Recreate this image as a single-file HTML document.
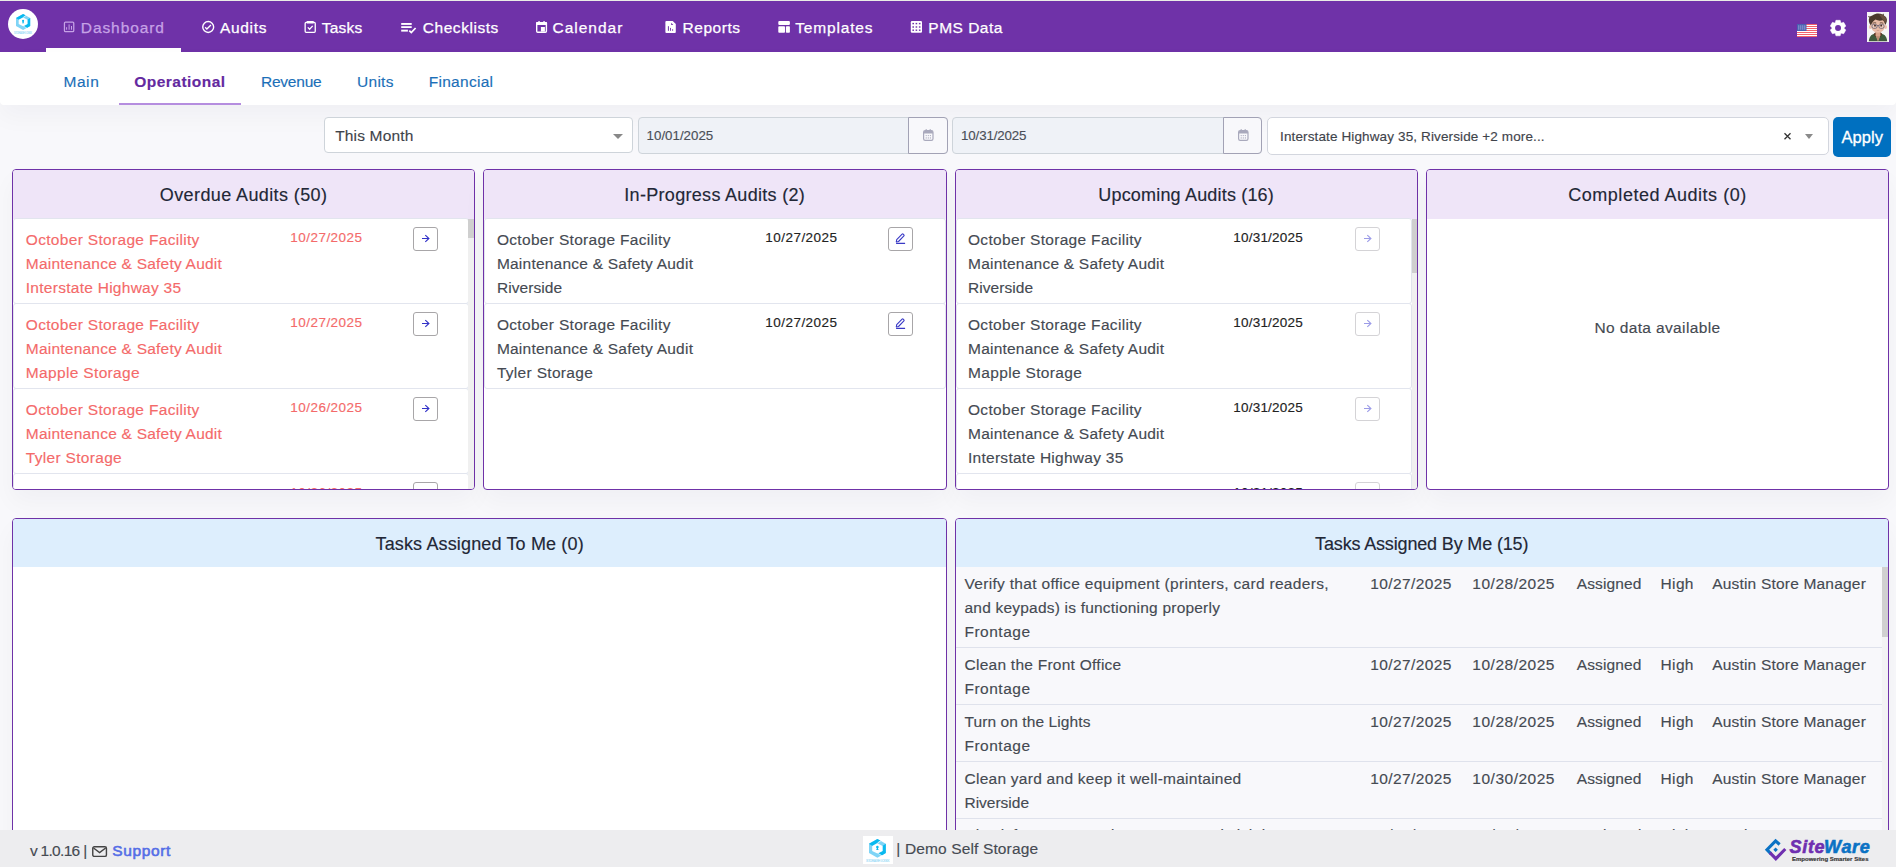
<!DOCTYPE html><html><head><meta charset="utf-8"><title>Dashboard</title><style>
*{box-sizing:border-box}
html,body{margin:0;padding:0}
html{width:1896px;height:867px;overflow:hidden}
body{width:1896px;height:867px;overflow:hidden;position:relative;background:#f8f8fb;font-family:"Liberation Sans",sans-serif;color:#495057}
.t{-webkit-text-stroke-width:.15px;position:absolute;white-space:nowrap;line-height:1;display:block}
.a{position:absolute;display:block}
.card{position:absolute;background:#fff;border:1px solid #6f32a8;border-radius:4px;overflow:hidden;box-shadow:0 12px 24px rgba(18,38,63,.035)}
.hd{position:absolute;left:0;top:0;right:0}
.row{position:absolute;left:0;background:#fff;border:1px solid #e2e5ee;border-radius:3px}
.btn{position:absolute;width:25px;height:24px;border:1px solid #a8a6a8;border-radius:3px;background:#fff}
.sb{position:absolute;background:#f1f1f1}
.th{position:absolute;background:#d0d0d0}
svg{position:absolute;display:block;overflow:visible}

</style></head><body>
<div class="a" style="left:0;top:0;width:1896px;height:1px;background:#e9ece6"></div>
<div class="a" style="left:0;top:1px;width:1896px;height:51px;background:#6f32a8"></div>
<div class="a" style="left:46px;top:48px;width:135px;height:4px;background:#fff"></div>
<div class="a" style="left:8px;top:9px;width:30px;height:30px;border-radius:50%;background:#fff"></div>
<svg style="left:15.9px;top:14px" width="14.2" height="15.90" viewBox="0 0 100 112"><polygon points="50,0 100,28 100,84 50,112 0,84 0,28" fill="#7fd4f6"/><polygon points="0,28 50,0 70,11 50,23 20,41" fill="#08b9ef"/><polygon points="100,28 100,84 76,98 56,87 80,71 80,41" fill="#08b9ef"/><polygon points="50,25 81,41 81,71 50,87 19,71 19,41" fill="#fff"/><path d="M72,9.500L52,22.500" stroke="#fff" stroke-width="5"/><path d="M78,100L54,86" stroke="#fff" stroke-width="4"/><circle cx="50" cy="48" r="7.500" fill="#08b9ef"/><path d="M45,50h10l-1.500,8l4.500,8h-16l4.500,-8z" fill="#08b9ef"/></svg>
<span class="t" style="left:13.5px;top:32px;font-size:3px;color:#9bdcf8;transform-origin:left top;transform:scaleX(.8);letter-spacing:-.2px">STORAGE LOGIX</span>
<svg style="left:0;top:0" width="1896" height="52" viewBox="0 0 1896 52"><rect x="64.45" y="22.05" width="9.3" height="9.6" rx="1" fill="none" stroke="#c6a2e6" stroke-width="1.25"/><rect x="66.1" y="27.2" width="1" height="2.5" fill="#c6a2e6"/><rect x="68.6" y="24.4" width="1" height="5.3" fill="#c6a2e6"/><rect x="71" y="26" width="1" height="3.7" fill="#c6a2e6"/><circle cx="208.2" cy="27" r="5.45" fill="none" stroke="#fff" stroke-width="1.4"/><path d="M205.2 27.2l1.7 1.9 4-4" fill="none" stroke="#fff" stroke-width="1.4"/><rect x="305.15" y="22.4" width="10.1" height="9.95" rx="1" fill="none" stroke="#fff" stroke-width="1.3"/><rect x="306.6" y="21.1" width="7.2" height="2.5" rx=".6" fill="#fff"/><path d="M307.8 27.4l1.8 1.8 3.1-3.3" fill="none" stroke="#fff" stroke-width="1.3"/><rect x="401.2" y="23" width="10.5" height="1.9" fill="#fff"/><rect x="401.2" y="26.2" width="10.5" height="1.8" fill="#fff"/><rect x="401.2" y="29.7" width="6.7" height="1.9" fill="#fff"/><path d="M409.3 30.6l2 2 4.300-4.600" fill="none" stroke="#fff" stroke-width="1.7"/><rect x="536.7" y="22.8" width="9.7" height="9.5" rx="1" fill="none" stroke="#fff" stroke-width="1.4"/><rect x="536" y="22.100" width="11.100" height="2.800" rx=".8" fill="#fff"/><rect x="538.3" y="21.100" width="1.500" height="2" fill="#fff"/><rect x="543.3" y="21.100" width="1.500" height="2" fill="#fff"/><rect x="540.9" y="27" width="4" height="4.600" fill="#fff"/><path d="M666.400 21h6.300l3.100 3.100v7.900a1 1 0 0 1-1 1h-8.400a1 1 0 0 1-1-1v-10a1 1 0 0 1 1-1z" fill="#fff"/><path d="M671.200 22.800v2.100h2.100z" fill="#6f32a8"/><rect x="667.900" y="26.200" width="1" height="4.600" fill="#6f32a8"/><rect x="670.100" y="27.900" width=".9" height="2.900" fill="#6f32a8"/><rect x="672.200" y="29.200" width=".9" height="1.600" fill="#6f32a8"/><rect x="778.300" y="21.100" width="11.600" height="3.800" rx="1" fill="#fff"/><rect x="778.300" y="26.200" width="6.700" height="6.600" rx=".8" fill="#fff"/><rect x="785.900" y="26.200" width="4" height="6.600" rx=".8" fill="#fff"/><rect x="910.800" y="21.100" width="11.200" height="11.700" rx="1.200" fill="#fff"/><rect x="912.40" y="22.90" width="1.600" height="1.400" fill="#6f32a8"/><rect x="912.40" y="26.30" width="1.600" height="1.400" fill="#6f32a8"/><rect x="912.40" y="29.50" width="1.600" height="1.400" fill="#6f32a8"/><rect x="915.60" y="22.90" width="1.600" height="1.400" fill="#6f32a8"/><rect x="915.60" y="26.30" width="1.600" height="1.400" fill="#6f32a8"/><rect x="915.60" y="29.50" width="1.600" height="1.400" fill="#6f32a8"/><rect x="918.90" y="22.90" width="1.600" height="1.400" fill="#6f32a8"/><rect x="918.90" y="26.30" width="1.600" height="1.400" fill="#6f32a8"/><rect x="918.90" y="29.50" width="1.600" height="1.400" fill="#6f32a8"/></svg>
<svg style="left:1797px;top:24px" width="20" height="13" viewBox="0 0 20 13"><rect width="20" height="13" fill="#fff"/><rect x="0" y="0.00" width="20" height="1" fill="#f2616c"/><rect x="0" y="2.00" width="20" height="1" fill="#f2616c"/><rect x="0" y="4.00" width="20" height="1" fill="#f2616c"/><rect x="0" y="6.00" width="20" height="1" fill="#f2616c"/><rect x="0" y="8.00" width="20" height="1" fill="#f2616c"/><rect x="0" y="10.00" width="20" height="1" fill="#f2616c"/><rect x="0" y="12.00" width="20" height="1" fill="#f2616c"/><rect width="9.5" height="7" fill="#4a5fb0"/><rect x="1.5" y="1.2" width=".7" height="4.6" fill="#aab4e0"/><rect x="3.5" y="1.2" width=".7" height="4.6" fill="#aab4e0"/><rect x="5.5" y="1.2" width=".7" height="4.6" fill="#aab4e0"/><rect x="7.5" y="1.2" width=".7" height="4.6" fill="#aab4e0"/></svg>
<svg style="left:1830px;top:20px" width="16.1" height="16.1" viewBox="0 0 100 100"><polygon points="32.9,15.5 36.7,1.8 63.3,1.8 67.1,15.5 71.3,17.9 85.1,14.4 98.4,37.5 88.4,47.6 88.4,52.4 98.4,62.5 85.1,85.6 71.3,82.1 67.1,84.5 63.3,98.2 36.7,98.2 32.9,84.5 28.7,82.1 14.9,85.6 1.6,62.5 11.6,52.4 11.6,47.6 1.6,37.5 14.9,14.4 28.7,17.9" fill="#fff" stroke="#fff" stroke-width="3" stroke-linejoin="round"/><circle cx="50" cy="50" r="18.500" fill="#6f32a8"/></svg>
<div class="a" style="left:1867px;top:12px;width:22px;height:30px;background:#f6f5f5;overflow:hidden"><svg style="left:0;top:0" width="22" height="30" viewBox="0 0 22 30"><rect width="22" height="30" fill="#f6f5f5"/><path d="M1.800 29.300c.3-3.300 1.400-6 4.200-7l2.500-.8h5l2.500.8c2.800 1 3.900 3.700 4.200 7z" fill="#3f5a3c"/><path d="M6.800 21.800l1.500-1.300h5.400l1.500 1.300-1.200 2.700h-6z" fill="#5c3323"/><path d="M8.600 19h4.800v4.200l-2.400 6.100-2.400-6.100z" fill="#d9a58c"/><path d="M9 24.200h4l-2 5.100z" fill="#b98a72"/><ellipse cx="3.400" cy="15" rx="1.400" ry="2.100" fill="#eec0ae"/><ellipse cx="18.600" cy="15" rx="1.400" ry="2.100" fill="#eec0ae"/><path d="M4.300 11c0-3.500 2.800-5.500 6.700-5.500s6.700 2 6.700 5.500v3.500c0 3.800-3.500 6.200-6.700 6.200s-6.700-2.400-6.700-6.200z" fill="#e9bca7"/><path d="M3.900 13.500c-1.800-2-2.800-5.500-1.500-8-1-.5-1.300-1-1.200-1.500 1.500.8 3 .3 4.500-.8 3-2.200 7-2.400 9.800-.6l1.200-1 .1 1.800c2.300 1 3.600 3.300 3 6-.3 1.500-1 2.600-1.700 3.600-.2-2.300-1-3.800-2.300-4.800-2.200.8-5.300.6-7.300-.6-1.800 1.200-3.600 3-4.600 5.900z" fill="#4a392b"/><path d="M12 2.500c2.500-.3 5 .5 6.300 2.500 1.200 1.800 1 4-.2 6.500-.4-1.600-1-2.500-2-3.300-1-1.600-2.400-3.600-4.100-5.700z" fill="#6a5240"/><path d="M5.700 11.300q1.700-1 3.500-.3M12.800 11q1.800-.7 3.500.3" stroke="#5a4537" stroke-width=".9" fill="none"/><rect x="5" y="12.400" width="5" height="3.900" rx="1.500" fill="rgba(255,255,255,.25)" stroke="#55536a" stroke-width=".7"/><rect x="12" y="12.400" width="5" height="3.900" rx="1.500" fill="rgba(255,255,255,.25)" stroke="#55536a" stroke-width=".7"/><path d="M10 13.600h2" stroke="#55536a" stroke-width=".7"/><ellipse cx="8" cy="13.700" rx="1" ry=".9" fill="#4a2f25"/><ellipse cx="14.200" cy="13.700" rx="1" ry=".9" fill="#4a2f25"/><path d="M9.700 18.300q1.300.6 2.600 0" stroke="#c48f7d" stroke-width=".6" fill="none"/></svg></div>
<div class="a" style="left:0;top:52px;width:1896px;height:53px;background:#fff;border-radius:0 0 4px 4px;box-shadow:0 12px 24px rgba(18,38,63,.035)"></div>
<div class="a" style="left:119px;top:103px;width:122px;height:2px;background:#b58ddf"></div>
<div class="a" style="left:324px;top:117px;width:309px;height:36px;background:#fff;border:1px solid #ced4da;border-radius:4px"></div>
<div class="a" style="left:613px;top:134px;width:0;height:0;border-left:5px solid transparent;border-right:5px solid transparent;border-top:5px solid #888"></div>
<div class="a" style="left:638px;top:117px;width:310px;height:36.500px;background:#eff2f7;border:1px solid #ced4da;border-radius:4px"></div>
<div class="a" style="left:908.2px;top:117px;width:39.800px;height:36.500px;background:#f8f8fb;border:1px solid #a2a2b5;border-radius:0 4px 4px 0"></div>
<svg style="left:923.2px;top:129px" width="10.6" height="11.9" viewBox="0 0 10.600 11.900"><rect x=".6" y="1.700" width="9.400" height="9.600" rx="1.600" fill="none" stroke="#a9a9bc" stroke-width="1.200"/><path d="M.6 3.300a1.600 1.600 0 0 1 1.600-1.600h6.200a1.600 1.600 0 0 1 1.600 1.600v1.300h-9.400z" fill="#a9a9bc"/><rect x="2.700" y="0" width="1.200" height="2.500" rx=".5" fill="#a9a9bc"/><rect x="6.700" y="0" width="1.200" height="2.500" rx=".5" fill="#a9a9bc"/><circle cx="3.2" cy="6.6" r=".62" fill="#a9a9bc"/><circle cx="3.2" cy="9" r=".62" fill="#a9a9bc"/><circle cx="5.3" cy="6.6" r=".62" fill="#a9a9bc"/><circle cx="5.3" cy="9" r=".62" fill="#a9a9bc"/><circle cx="7.4" cy="6.6" r=".62" fill="#a9a9bc"/><circle cx="7.4" cy="9" r=".62" fill="#a9a9bc"/></svg>
<div class="a" style="left:952.4px;top:117px;width:310px;height:36.500px;background:#eff2f7;border:1px solid #ced4da;border-radius:4px"></div>
<div class="a" style="left:1222.6px;top:117px;width:39.800px;height:36.500px;background:#f8f8fb;border:1px solid #a2a2b5;border-radius:0 4px 4px 0"></div>
<svg style="left:1237.6px;top:129px" width="10.6" height="11.9" viewBox="0 0 10.600 11.900"><rect x=".6" y="1.700" width="9.400" height="9.600" rx="1.600" fill="none" stroke="#a9a9bc" stroke-width="1.200"/><path d="M.6 3.300a1.600 1.600 0 0 1 1.600-1.600h6.200a1.600 1.600 0 0 1 1.600 1.600v1.300h-9.400z" fill="#a9a9bc"/><rect x="2.700" y="0" width="1.200" height="2.500" rx=".5" fill="#a9a9bc"/><rect x="6.700" y="0" width="1.200" height="2.500" rx=".5" fill="#a9a9bc"/><circle cx="3.2" cy="6.6" r=".62" fill="#a9a9bc"/><circle cx="3.2" cy="9" r=".62" fill="#a9a9bc"/><circle cx="5.3" cy="6.6" r=".62" fill="#a9a9bc"/><circle cx="5.3" cy="9" r=".62" fill="#a9a9bc"/><circle cx="7.4" cy="6.6" r=".62" fill="#a9a9bc"/><circle cx="7.4" cy="9" r=".62" fill="#a9a9bc"/></svg>
<div class="a" style="left:1267px;top:117px;width:562px;height:38px;background:#fff;border:1px solid #d3d6de;border-radius:5px"></div>
<svg style="left:1783.5px;top:132.7px" width="7" height="6.5" viewBox="0 0 7 6.5"><path d="M.5.300L6.500 6.200M6.500.300L.5 6.200" stroke="#333" stroke-width="1.300"/></svg>
<div class="a" style="left:1805px;top:134px;width:0;height:0;border-left:4.5px solid transparent;border-right:4.5px solid transparent;border-top:5px solid #8a8a8a"></div>
<div class="a" style="left:1833px;top:117px;width:58px;height:40px;background:#0070c0;border-radius:5px"></div>
<div class="card" style="left:12px;top:169px;width:463px;height:321px"><div class="hd" style="height:49px;background:#efe5f8"></div><div class="row" style="top:48px;width:456px;height:86px"></div><div class="btn" style="left:400px;top:57px;border-color:#a8a6a8"><svg style="left:0;top:0" width="23" height="22" viewBox="0 0 23 22"><path d="M8 10.500H14.600M11.300 7.100L14.900 10.500L11.300 13.900" fill="none" stroke="#3232c8" stroke-width="1.150"/></svg></div><div class="row" style="top:133px;width:456px;height:86px"></div><div class="btn" style="left:400px;top:142px;border-color:#a8a6a8"><svg style="left:0;top:0" width="23" height="22" viewBox="0 0 23 22"><path d="M8 10.500H14.600M11.300 7.100L14.900 10.500L11.300 13.900" fill="none" stroke="#3232c8" stroke-width="1.150"/></svg></div><div class="row" style="top:218px;width:456px;height:86px"></div><div class="btn" style="left:400px;top:227px;border-color:#a8a6a8"><svg style="left:0;top:0" width="23" height="22" viewBox="0 0 23 22"><path d="M8 10.500H14.600M11.300 7.100L14.900 10.500L11.300 13.900" fill="none" stroke="#3232c8" stroke-width="1.150"/></svg></div><div class="row" style="top:303px;width:456px;height:86px"></div><div class="btn" style="left:400px;top:312px;border-color:#a8a6a8"><svg style="left:0;top:0" width="23" height="22" viewBox="0 0 23 22"><path d="M8 10.500H14.600M11.300 7.100L14.900 10.500L11.300 13.900" fill="none" stroke="#3232c8" stroke-width="1.150"/></svg></div><div class="sb" style="left:455.4px;top:49px;width:5.6px;height:271px"></div><div class="th" style="left:455.4px;top:49px;width:5.6px;height:19px"></div></div>
<div class="card" style="left:483px;top:169px;width:464px;height:321px"><div class="hd" style="height:49px;background:#efe5f8"></div><div class="row" style="top:48px;width:462px;height:86px"></div><div class="btn" style="left:404px;top:57px;border-color:#a8a6a8"><svg style="left:-.9px;top:-1.1px" width="23" height="22" viewBox="0 0 23 22"><path d="M8.700 12.700L14.100 7.100a.8.800 0 0 1 1.100 0l.7.700a.8.800 0 0 1 0 1.100L10.500 14.500l-2.200.400z" fill="none" stroke="#3a3ac6" stroke-width="1.100" stroke-linejoin="round"/><path d="M8.100 16.300h9" stroke="#3a3ac6" stroke-width="1.300"/></svg></div><div class="row" style="top:133px;width:462px;height:86px"></div><div class="btn" style="left:404px;top:142px;border-color:#a8a6a8"><svg style="left:-.9px;top:-1.1px" width="23" height="22" viewBox="0 0 23 22"><path d="M8.700 12.700L14.100 7.100a.8.800 0 0 1 1.100 0l.7.700a.8.800 0 0 1 0 1.100L10.500 14.500l-2.200.400z" fill="none" stroke="#3a3ac6" stroke-width="1.100" stroke-linejoin="round"/><path d="M8.100 16.300h9" stroke="#3a3ac6" stroke-width="1.300"/></svg></div></div>
<div class="card" style="left:955px;top:169px;width:463px;height:321px"><div class="hd" style="height:49px;background:#efe5f8"></div><div class="row" style="top:48px;width:456px;height:86px"></div><div class="btn" style="left:399px;top:57px;border-color:#d4d3d6"><svg style="left:0;top:0" width="23" height="22" viewBox="0 0 23 22"><path d="M8 10.500H14.600M11.300 7.100L14.900 10.500L11.300 13.900" fill="none" stroke="#9c9ce8" stroke-width="1.150"/></svg></div><div class="row" style="top:133px;width:456px;height:86px"></div><div class="btn" style="left:399px;top:142px;border-color:#d4d3d6"><svg style="left:0;top:0" width="23" height="22" viewBox="0 0 23 22"><path d="M8 10.500H14.600M11.300 7.100L14.900 10.500L11.300 13.900" fill="none" stroke="#9c9ce8" stroke-width="1.150"/></svg></div><div class="row" style="top:218px;width:456px;height:86px"></div><div class="btn" style="left:399px;top:227px;border-color:#d4d3d6"><svg style="left:0;top:0" width="23" height="22" viewBox="0 0 23 22"><path d="M8 10.500H14.600M11.300 7.100L14.900 10.500L11.300 13.900" fill="none" stroke="#9c9ce8" stroke-width="1.150"/></svg></div><div class="row" style="top:303px;width:456px;height:86px"></div><div class="btn" style="left:399px;top:312px;border-color:#d4d3d6"><svg style="left:0;top:0" width="23" height="22" viewBox="0 0 23 22"><path d="M8 10.500H14.600M11.300 7.100L14.900 10.500L11.300 13.900" fill="none" stroke="#9c9ce8" stroke-width="1.150"/></svg></div><div class="sb" style="left:455.6px;top:49px;width:5.4px;height:271px"></div><div class="th" style="left:455.6px;top:49px;width:5.4px;height:54px"></div></div>
<div class="card" style="left:1426px;top:169px;width:463px;height:321px"><div class="hd" style="height:49px;background:#efe5f8"></div></div>
<div class="card" style="left:12px;top:518px;width:935px;height:346px"><div class="hd" style="height:48px;background:#ddeefd"></div></div>
<div class="card" style="left:955px;top:518px;width:934px;height:346px"><div class="hd" style="height:48px;background:#ddeefd"></div><div class="a" style="left:0;top:48px;width:927px;height:81px;background:#f8f8fb;border-bottom:1px solid #dfe2ec"></div><div class="a" style="left:0;top:129px;width:927px;height:57px;background:#f8f8fb;border-bottom:1px solid #dfe2ec"></div><div class="a" style="left:0;top:186px;width:927px;height:57px;background:#f8f8fb;border-bottom:1px solid #dfe2ec"></div><div class="a" style="left:0;top:243px;width:927px;height:57px;background:#f8f8fb;border-bottom:1px solid #dfe2ec"></div><div class="a" style="left:0;top:300px;width:927px;height:57px;background:#f8f8fb;border-bottom:1px solid #dfe2ec"></div><div class="sb" style="left:926.3px;top:48px;width:6px;height:320px;background:#f3f3f4"></div><div class="th" style="left:926.3px;top:48px;width:6px;height:69.600px"></div></div>
<div class="a" id="footer" style="left:0;top:830px;width:1896px;height:37px;background:#ededef;z-index:5"></div>
<svg style="z-index:6;left:91.8px;top:846.3px" width="15.2" height="11.2" viewBox="0 0 30 22"><rect x="1.500" y="1.500" width="27" height="19" rx="3" fill="none" stroke="#444" stroke-width="2.800"/><path d="M3 4l12 9 12-9" fill="none" stroke="#444" stroke-width="2.800"/></svg>
<div class="a" style="left:863px;top:836px;width:30px;height:28px;background:#fff;z-index:6"></div>
<svg style="z-index:7;left:869.25px;top:838.7px" width="16.8" height="18.82" viewBox="0 0 100 112"><polygon points="50,0 100,28 100,84 50,112 0,84 0,28" fill="#7fd4f6"/><polygon points="0,28 50,0 70,11 50,23 20,41" fill="#08b9ef"/><polygon points="100,28 100,84 76,98 56,87 80,71 80,41" fill="#08b9ef"/><polygon points="50,25 81,41 81,71 50,87 19,71 19,41" fill="#fff"/><path d="M72,9.500L52,22.500" stroke="#fff" stroke-width="5"/><path d="M78,100L54,86" stroke="#fff" stroke-width="4"/><circle cx="50" cy="48" r="7.500" fill="#08b9ef"/><path d="M45,50h10l-1.500,8l4.500,8h-16l4.500,-8z" fill="#08b9ef"/></svg>
<span class="t" style="left:865.8px;top:860px;font-size:3.6px;color:#a0ddf8;z-index:7;transform-origin:left top;transform:scaleX(.9);letter-spacing:-.3px">STORAGE LOGIX</span>
<svg style="left:1760px;top:834px;z-index:6" width="32" height="32" viewBox="1760 834 32 32"><path d="M1779.600 844.500L1775.600 840.900L1767 849.700L1771 853.800" fill="none" stroke="#0a72c4" stroke-width="3.100" stroke-linejoin="miter"/><path d="M1769.900 852.700L1775.800 858.700L1785.300 849" fill="none" stroke="#6f2fb0" stroke-width="3.100" stroke-linejoin="miter"/><rect x="1774" y="848.100" width="3.200" height="3.200" transform="rotate(45 1775.600 849.700)" fill="#0a72c4"/></svg>
<span class="t" style="left:80.80px;top:19.81px;font-size:15.5px;color:#c6a2e6;letter-spacing:0.919px;-webkit-text-stroke:.25px #c6a2e6;">Dashboard</span>
<span class="t" style="left:219.90px;top:19.81px;font-size:15.5px;color:#fff;letter-spacing:0.701px;-webkit-text-stroke:.25px #fff;">Audits</span>
<span class="t" style="left:321.70px;top:19.81px;font-size:15.5px;color:#fff;letter-spacing:0.215px;-webkit-text-stroke:.25px #fff;">Tasks</span>
<span class="t" style="left:422.80px;top:19.81px;font-size:15.5px;color:#fff;letter-spacing:0.546px;-webkit-text-stroke:.25px #fff;">Checklists</span>
<span class="t" style="left:552.50px;top:19.81px;font-size:15.5px;color:#fff;letter-spacing:0.987px;-webkit-text-stroke:.25px #fff;">Calendar</span>
<span class="t" style="left:682.50px;top:19.81px;font-size:15.5px;color:#fff;letter-spacing:0.546px;-webkit-text-stroke:.25px #fff;">Reports</span>
<span class="t" style="left:795.30px;top:19.81px;font-size:15.5px;color:#fff;letter-spacing:0.816px;-webkit-text-stroke:.25px #fff;">Templates</span>
<span class="t" style="left:928.30px;top:19.81px;font-size:15.5px;color:#fff;letter-spacing:0.495px;-webkit-text-stroke:.25px #fff;">PMS Data</span>
<span class="t" style="left:63.40px;top:74.01px;font-size:15.5px;color:#1b6fb8;letter-spacing:0.598px;">Main</span>
<span class="t" style="left:134.30px;top:74.01px;font-size:15.5px;color:#6429a0;font-weight:700;letter-spacing:0.460px;">Operational</span>
<span class="t" style="left:260.90px;top:74.01px;font-size:15.5px;color:#1b6fb8;letter-spacing:-0.207px;">Revenue</span>
<span class="t" style="left:357.10px;top:74.01px;font-size:15.5px;color:#1b6fb8;letter-spacing:0.254px;">Units</span>
<span class="t" style="left:428.70px;top:74.01px;font-size:15.5px;color:#1b6fb8;letter-spacing:0.285px;">Financial</span>
<span class="t" style="left:335.20px;top:128.01px;font-size:15.5px;color:#3f444b;letter-spacing:0.163px;">This Month</span>
<span class="t" style="left:646.60px;top:129.00px;font-size:13.3px;color:#4a4f57;letter-spacing:0.004px;">10/01/2025</span>
<span class="t" style="left:961.10px;top:129.00px;font-size:13.3px;color:#4a4f57;letter-spacing:-0.146px;">10/31/2025</span>
<span class="t" style="left:1280.10px;top:130.01px;font-size:13.5px;color:#3f444b;letter-spacing:0.124px;">Interstate Highway 35, Riverside +2 more...</span>
<span class="t" style="left:1841.40px;top:129.00px;font-size:16.5px;color:#fff;letter-spacing:0.064px;-webkit-text-stroke:.3px #fff;">Apply</span>
<span class="t" style="left:159.80px;top:185.86px;font-size:18px;color:#222736;letter-spacing:0.395px;">Overdue Audits (50)</span>
<span class="t" style="left:624.30px;top:185.86px;font-size:18px;color:#222736;letter-spacing:0.306px;">In-Progress Audits (2)</span>
<span class="t" style="left:1098.30px;top:185.86px;font-size:18px;color:#222736;letter-spacing:0.180px;">Upcoming Audits (16)</span>
<span class="t" style="left:1568.30px;top:185.86px;font-size:18px;color:#222736;letter-spacing:0.515px;">Completed Audits (0)</span>
<span class="t" style="left:1594.50px;top:319.51px;font-size:15.5px;color:#454a52;letter-spacing:0.366px;">No data available</span>
<span class="t" style="left:25.80px;top:231.70px;font-size:15.5px;color:#f46a6a;letter-spacing:0.318px;">October Storage Facility</span>
<span class="t" style="left:25.80px;top:255.70px;font-size:15.5px;color:#f46a6a;letter-spacing:0.225px;">Maintenance &amp; Safety Audit</span>
<span class="t" style="left:25.80px;top:279.70px;font-size:15.5px;color:#f46a6a;letter-spacing:0.270px;">Interstate Highway 35</span>
<span class="t" style="left:290.30px;top:230.80px;font-size:13.5px;color:#f46a6a;letter-spacing:0.462px;">10/27/2025</span>
<span class="t" style="left:25.80px;top:316.70px;font-size:15.5px;color:#f46a6a;letter-spacing:0.318px;">October Storage Facility</span>
<span class="t" style="left:25.80px;top:340.70px;font-size:15.5px;color:#f46a6a;letter-spacing:0.225px;">Maintenance &amp; Safety Audit</span>
<span class="t" style="left:25.80px;top:364.70px;font-size:15.5px;color:#f46a6a;letter-spacing:0.340px;">Mapple Storage</span>
<span class="t" style="left:290.30px;top:315.80px;font-size:13.5px;color:#f46a6a;letter-spacing:0.462px;">10/27/2025</span>
<span class="t" style="left:25.80px;top:401.70px;font-size:15.5px;color:#f46a6a;letter-spacing:0.318px;">October Storage Facility</span>
<span class="t" style="left:25.80px;top:425.70px;font-size:15.5px;color:#f46a6a;letter-spacing:0.225px;">Maintenance &amp; Safety Audit</span>
<span class="t" style="left:25.80px;top:449.70px;font-size:15.5px;color:#f46a6a;letter-spacing:0.309px;">Tyler Storage</span>
<span class="t" style="left:290.30px;top:400.80px;font-size:13.5px;color:#f46a6a;letter-spacing:0.462px;">10/26/2025</span>
<span class="t" style="left:25.80px;top:486.70px;font-size:15.5px;color:#f46a6a;letter-spacing:0.318px;clip-path:inset(0 0 13.20px 0);">October Storage Facility</span>
<span class="t" style="left:290.30px;top:485.80px;font-size:13.5px;color:#f46a6a;letter-spacing:0.462px;clip-path:inset(0 0 10.30px 0);">10/26/2025</span>
<span class="t" style="left:496.90px;top:231.70px;font-size:15.5px;color:#454a52;letter-spacing:0.318px;">October Storage Facility</span>
<span class="t" style="left:496.90px;top:255.70px;font-size:15.5px;color:#454a52;letter-spacing:0.225px;">Maintenance &amp; Safety Audit</span>
<span class="t" style="left:496.90px;top:279.70px;font-size:15.5px;color:#454a52;letter-spacing:0.066px;">Riverside</span>
<span class="t" style="left:765.30px;top:230.80px;font-size:13.5px;color:#222;letter-spacing:0.462px;">10/27/2025</span>
<span class="t" style="left:496.90px;top:316.70px;font-size:15.5px;color:#454a52;letter-spacing:0.318px;">October Storage Facility</span>
<span class="t" style="left:496.90px;top:340.70px;font-size:15.5px;color:#454a52;letter-spacing:0.225px;">Maintenance &amp; Safety Audit</span>
<span class="t" style="left:496.90px;top:364.70px;font-size:15.5px;color:#454a52;letter-spacing:0.309px;">Tyler Storage</span>
<span class="t" style="left:765.30px;top:315.80px;font-size:13.5px;color:#222;letter-spacing:0.462px;">10/27/2025</span>
<span class="t" style="left:968.00px;top:231.70px;font-size:15.5px;color:#454a52;letter-spacing:0.318px;">October Storage Facility</span>
<span class="t" style="left:968.00px;top:255.70px;font-size:15.5px;color:#454a52;letter-spacing:0.225px;">Maintenance &amp; Safety Audit</span>
<span class="t" style="left:968.00px;top:279.70px;font-size:15.5px;color:#454a52;letter-spacing:0.066px;">Riverside</span>
<span class="t" style="left:1233.30px;top:230.80px;font-size:13.5px;color:#222;letter-spacing:0.202px;">10/31/2025</span>
<span class="t" style="left:968.00px;top:316.70px;font-size:15.5px;color:#454a52;letter-spacing:0.318px;">October Storage Facility</span>
<span class="t" style="left:968.00px;top:340.70px;font-size:15.5px;color:#454a52;letter-spacing:0.225px;">Maintenance &amp; Safety Audit</span>
<span class="t" style="left:968.00px;top:364.70px;font-size:15.5px;color:#454a52;letter-spacing:0.340px;">Mapple Storage</span>
<span class="t" style="left:1233.30px;top:315.80px;font-size:13.5px;color:#222;letter-spacing:0.202px;">10/31/2025</span>
<span class="t" style="left:968.00px;top:401.70px;font-size:15.5px;color:#454a52;letter-spacing:0.318px;">October Storage Facility</span>
<span class="t" style="left:968.00px;top:425.70px;font-size:15.5px;color:#454a52;letter-spacing:0.225px;">Maintenance &amp; Safety Audit</span>
<span class="t" style="left:968.00px;top:449.70px;font-size:15.5px;color:#454a52;letter-spacing:0.270px;">Interstate Highway 35</span>
<span class="t" style="left:1233.30px;top:400.80px;font-size:13.5px;color:#222;letter-spacing:0.202px;">10/31/2025</span>
<span class="t" style="left:968.00px;top:486.70px;font-size:15.5px;color:#454a52;letter-spacing:0.318px;clip-path:inset(0 0 13.20px 0);">October Storage Facility</span>
<span class="t" style="left:1233.30px;top:485.80px;font-size:13.5px;color:#222;letter-spacing:0.202px;clip-path:inset(0 0 10.30px 0);">10/31/2025</span>
<span class="t" style="left:375.50px;top:534.70px;font-size:18px;color:#222736;letter-spacing:0.147px;">Tasks Assigned To Me (0)</span>
<span class="t" style="left:1315.10px;top:534.70px;font-size:18px;color:#222736;letter-spacing:-0.156px;">Tasks Assigned By Me (15)</span>
<span class="t" style="left:964.50px;top:575.70px;font-size:15.5px;color:#454a52;letter-spacing:0.312px;">Verify that office equipment (printers, card readers,</span>
<span class="t" style="left:964.50px;top:599.70px;font-size:15.5px;color:#454a52;letter-spacing:0.207px;">and keypads) is functioning properly</span>
<span class="t" style="left:964.50px;top:623.70px;font-size:15.5px;color:#454a52;letter-spacing:0.494px;">Frontage</span>
<span class="t" style="left:1370.30px;top:575.70px;font-size:15.5px;color:#454a52;letter-spacing:0.402px;">10/27/2025</span>
<span class="t" style="left:1472.30px;top:575.70px;font-size:15.5px;color:#454a52;letter-spacing:0.512px;">10/28/2025</span>
<span class="t" style="left:1576.80px;top:575.70px;font-size:15.5px;color:#454a52;letter-spacing:0.104px;">Assigned</span>
<span class="t" style="left:1660.60px;top:575.70px;font-size:15.5px;color:#454a52;letter-spacing:0.327px;">High</span>
<span class="t" style="left:1712.20px;top:575.70px;font-size:15.5px;color:#454a52;letter-spacing:0.194px;">Austin Store Manager</span>
<span class="t" style="left:964.50px;top:656.70px;font-size:15.5px;color:#454a52;letter-spacing:0.256px;">Clean the Front Office</span>
<span class="t" style="left:964.50px;top:680.70px;font-size:15.5px;color:#454a52;letter-spacing:0.494px;">Frontage</span>
<span class="t" style="left:1370.30px;top:656.70px;font-size:15.5px;color:#454a52;letter-spacing:0.402px;">10/27/2025</span>
<span class="t" style="left:1472.30px;top:656.70px;font-size:15.5px;color:#454a52;letter-spacing:0.512px;">10/28/2025</span>
<span class="t" style="left:1576.80px;top:656.70px;font-size:15.5px;color:#454a52;letter-spacing:0.104px;">Assigned</span>
<span class="t" style="left:1660.60px;top:656.70px;font-size:15.5px;color:#454a52;letter-spacing:0.327px;">High</span>
<span class="t" style="left:1712.20px;top:656.70px;font-size:15.5px;color:#454a52;letter-spacing:0.194px;">Austin Store Manager</span>
<span class="t" style="left:964.50px;top:713.70px;font-size:15.5px;color:#454a52;letter-spacing:0.090px;">Turn on the Lights</span>
<span class="t" style="left:964.50px;top:737.70px;font-size:15.5px;color:#454a52;letter-spacing:0.494px;">Frontage</span>
<span class="t" style="left:1370.30px;top:713.70px;font-size:15.5px;color:#454a52;letter-spacing:0.402px;">10/27/2025</span>
<span class="t" style="left:1472.30px;top:713.70px;font-size:15.5px;color:#454a52;letter-spacing:0.512px;">10/28/2025</span>
<span class="t" style="left:1576.80px;top:713.70px;font-size:15.5px;color:#454a52;letter-spacing:0.104px;">Assigned</span>
<span class="t" style="left:1660.60px;top:713.70px;font-size:15.5px;color:#454a52;letter-spacing:0.327px;">High</span>
<span class="t" style="left:1712.20px;top:713.70px;font-size:15.5px;color:#454a52;letter-spacing:0.194px;">Austin Store Manager</span>
<span class="t" style="left:964.50px;top:770.70px;font-size:15.5px;color:#454a52;letter-spacing:0.260px;">Clean yard and keep it well-maintained</span>
<span class="t" style="left:964.50px;top:794.70px;font-size:15.5px;color:#454a52;letter-spacing:-0.012px;">Riverside</span>
<span class="t" style="left:1370.30px;top:770.70px;font-size:15.5px;color:#454a52;letter-spacing:0.402px;">10/27/2025</span>
<span class="t" style="left:1472.30px;top:770.70px;font-size:15.5px;color:#454a52;letter-spacing:0.512px;">10/30/2025</span>
<span class="t" style="left:1576.80px;top:770.70px;font-size:15.5px;color:#454a52;letter-spacing:0.104px;">Assigned</span>
<span class="t" style="left:1660.60px;top:770.70px;font-size:15.5px;color:#454a52;letter-spacing:0.327px;">High</span>
<span class="t" style="left:1712.20px;top:770.70px;font-size:15.5px;color:#454a52;letter-spacing:0.194px;">Austin Store Manager</span>
<span class="t" style="left:964.50px;top:827.31px;font-size:15.5px;color:#454a52;">Check for any Hazards, Damage, and Lighting Issues</span>
<span class="t" style="left:1370.30px;top:827.31px;font-size:15.5px;color:#454a52;letter-spacing:0.402px;">10/27/2025</span>
<span class="t" style="left:1472.30px;top:827.31px;font-size:15.5px;color:#454a52;letter-spacing:0.512px;">10/31/2025</span>
<span class="t" style="left:1576.80px;top:827.31px;font-size:15.5px;color:#454a52;letter-spacing:0.104px;">Assigned</span>
<span class="t" style="left:1660.60px;top:827.31px;font-size:15.5px;color:#454a52;letter-spacing:0.327px;">High</span>
<span class="t" style="left:1712.20px;top:827.31px;font-size:15.5px;color:#454a52;letter-spacing:0.194px;">Austin Store Manager</span>
<span class="t" style="left:29.90px;top:842.81px;font-size:15.5px;color:#454a52;letter-spacing:-0.688px;z-index:6;">v 1.0.16 |</span>
<span class="t" style="left:112.20px;top:842.81px;font-size:15.5px;color:#556ee6;letter-spacing:0.643px;z-index:6;-webkit-text-stroke:.6px #556ee6;">Support</span>
<span class="t" style="left:896.30px;top:840.61px;font-size:15.5px;color:#454a52;letter-spacing:0.137px;z-index:6;">| Demo Self Storage</span>
<span class="t" style="left:1789.50px;top:838.01px;font-size:18px;color:#6f2fb0;font-weight:700;letter-spacing:0.696px;z-index:6;font-style:italic;-webkit-text-stroke:.6px #6f2fb0;">Site</span>
<span class="t" style="left:1824.10px;top:838.01px;font-size:18px;color:#0a72c4;font-weight:700;letter-spacing:0.674px;z-index:6;font-style:italic;-webkit-text-stroke:.6px #0a72c4;">Ware</span>
<span class="t" style="left:1792.00px;top:856.01px;font-size:6px;color:#333;font-weight:700;letter-spacing:0.006px;z-index:6;">Empowering Smarter Sites</span>
</body></html>
